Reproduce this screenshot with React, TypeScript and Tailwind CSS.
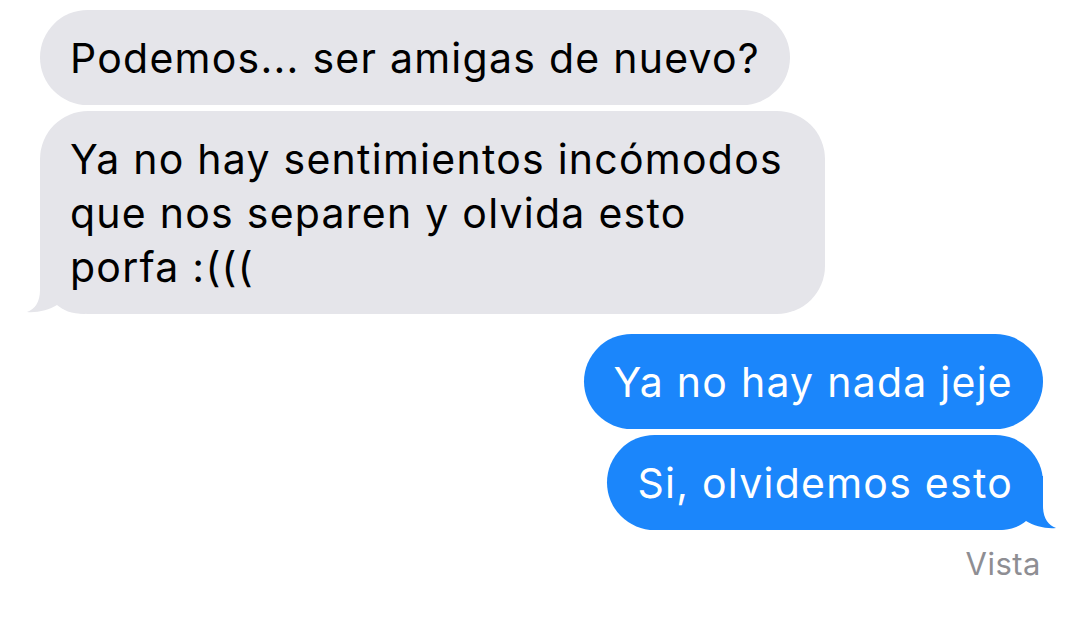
import React from "react";

const GRAY = "#e5e5ea";
const BLUE = "#1b86fb";

function Bubble({
  from,
  tail,
  children,
  className = "",
}: {
  from: "them" | "me";
  tail?: boolean;
  children: React.ReactNode;
  className?: string;
}) {
  const isMe = from === "me";
  return (
    <div
      className={`relative w-fit rounded-[48px] px-[30px] py-[20.5px] text-[41px] leading-[54px] tracking-[1.25px] ${
        isMe ? "self-end bg-[#1b86fb] text-white" : "self-start bg-[#e5e5ea] text-black"
      } ${className}`}
    >
      {tail && !isMe && (
        <svg
          className="absolute bottom-0 left-[-15px]"
          width="60"
          height="54"
          viewBox="0 0 60 54"
        >
          <path
            d="M15 0 L15 30 C15 42 10 49 2 52 C12 53 24 50 32 45 C38 50 46 54 60 54 L60 0 Z"
            fill={GRAY}
          />
        </svg>
      )}
      {tail && isMe && (
        <svg
          className="absolute bottom-0 right-[-15px]"
          width="60"
          height="54"
          viewBox="0 0 60 54"
        >
          <path
            d="M45 0 L45 30 C45 42 50 49 58 52 C48 53 36 50 28 45 C22 50 14 54 0 54 L0 0 Z"
            fill={BLUE}
          />
        </svg>
      )}
      <span className="relative">{children}</span>
    </div>
  );
}

export default function App() {
  return (
    <div
      className="flex h-[618px] w-[1080px] flex-col bg-white pl-[40px] pr-[37px] pt-[10px]"
      style={{ fontFamily: "Inter, 'Liberation Sans', sans-serif" }}
    >
      <div className="flex flex-col gap-[6px]">
        <Bubble from="them">Podemos... ser amigas de nuevo?</Bubble>
        <Bubble from="them" tail className="max-w-[785px]">
          Ya no hay sentimientos incómodos que nos separen y olvida esto{" "}
          <span className="whitespace-nowrap">porfa :(((</span>
        </Bubble>
      </div>
      <div className="mt-[20px] flex flex-col gap-[6px]">
        <Bubble from="me">Ya no hay nada jeje</Bubble>
        <Bubble from="me" tail>
          Si, olvidemos esto
        </Bubble>
      </div>
      <div className="mt-[16px] self-end pr-[2px] text-[31px] leading-[36px] tracking-[0.5px] text-[#8e8e93]">
        Vista
      </div>
    </div>
  );
}
